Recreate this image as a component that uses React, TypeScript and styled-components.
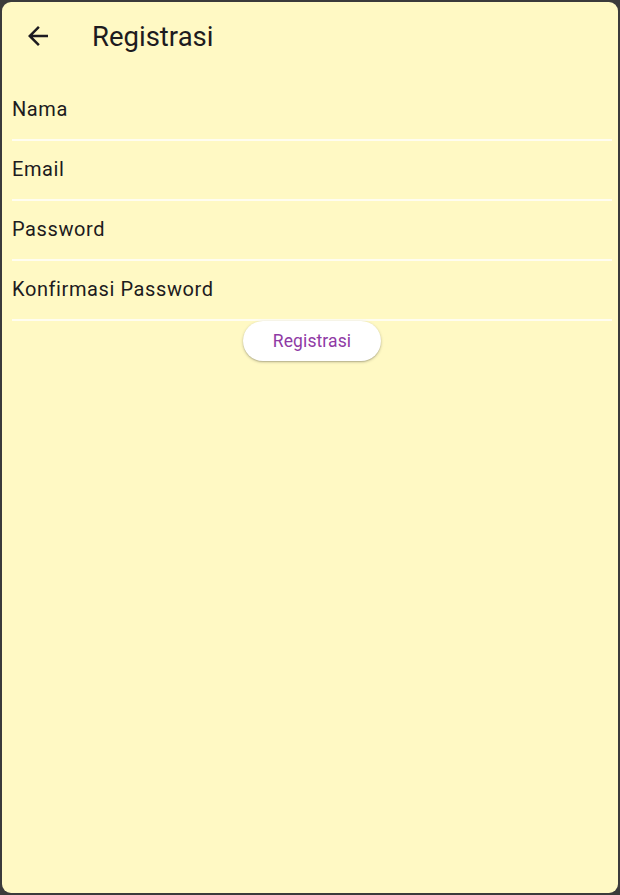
import React from "react";
import styled, { createGlobalStyle } from "styled-components";

const Global = createGlobalStyle`
  html, body { margin: 0; padding: 0; background: #3b3b3b; }
  body { font-family: Roboto, "Noto Sans", sans-serif; }
  * { box-sizing: border-box; }
`;

const Frame = styled.div`
  width: 620px;
  height: 895px;
  padding: 2px 2px 2px 2px;
  background: #3b3b3b;
`;

const Screen = styled.div`
  width: 100%;
  height: 100%;
  background: #fff9c4;
  border-radius: 9px;
  display: flex;
  flex-direction: column;
  overflow: hidden;
`;

const AppBar = styled.header`
  height: 56px;
  margin-top: 6px;
  display: flex;
  align-items: center;
  padding-left: 20px;
  gap: 38px;
`;

const BackButton = styled.button`
  width: 32px;
  height: 32px;
  padding: 0;
  border: none;
  background: transparent;
  display: flex;
  align-items: center;
  justify-content: center;
  color: #1d1b20;
`;

const Title = styled.h1`
  margin: 0;
  font-weight: 400;
  font-size: 27.5px;
  color: #1d1b20;
  letter-spacing: 0;
`;

const Form = styled.form`
  display: flex;
  flex-direction: column;
  padding: 17px 6px 0 10px;
`;

const Field = styled.label`
  height: 60px;
  display: flex;
  align-items: center;
  padding-bottom: 2px;
  border-bottom: 2px solid #fffdf0;
  font-size: 20px;
  letter-spacing: 0.6px;
  color: #1d1b20;
`;

const ButtonRow = styled.div`
  display: flex;
  justify-content: center;
`;

const SubmitButton = styled.button`
  width: 138px;
  height: 40px;
  border: none;
  border-radius: 20px;
  background: #ffffff;
  color: #8f3aa5;
  font-family: Roboto, sans-serif;
  font-size: 17.5px;
  letter-spacing: 0.1px;
  box-shadow: 0 1px 3px rgba(0, 0, 0, 0.25), 0 1px 1px rgba(0, 0, 0, 0.1);
`;

const fields = ["Nama", "Email", "Password", "Konfirmasi Password"];

export default function App() {
  return (
    <>
      <Global />
      <Frame>
        <Screen>
          <AppBar>
            <BackButton aria-label="Kembali">
              <svg width="30" height="30" viewBox="0 0 24 24">
                <path
                  d="M20 11H7.83l5.59-5.59L12 4l-8 8 8 8 1.41-1.41L7.83 13H20v-2z"
                  fill="currentColor"
                />
              </svg>
            </BackButton>
            <Title>Registrasi</Title>
          </AppBar>
          <Form>
            {fields.map((f) => (
              <Field key={f}>{f}</Field>
            ))}
            <ButtonRow>
              <SubmitButton type="button">Registrasi</SubmitButton>
            </ButtonRow>
          </Form>
        </Screen>
      </Frame>
    </>
  );
}
